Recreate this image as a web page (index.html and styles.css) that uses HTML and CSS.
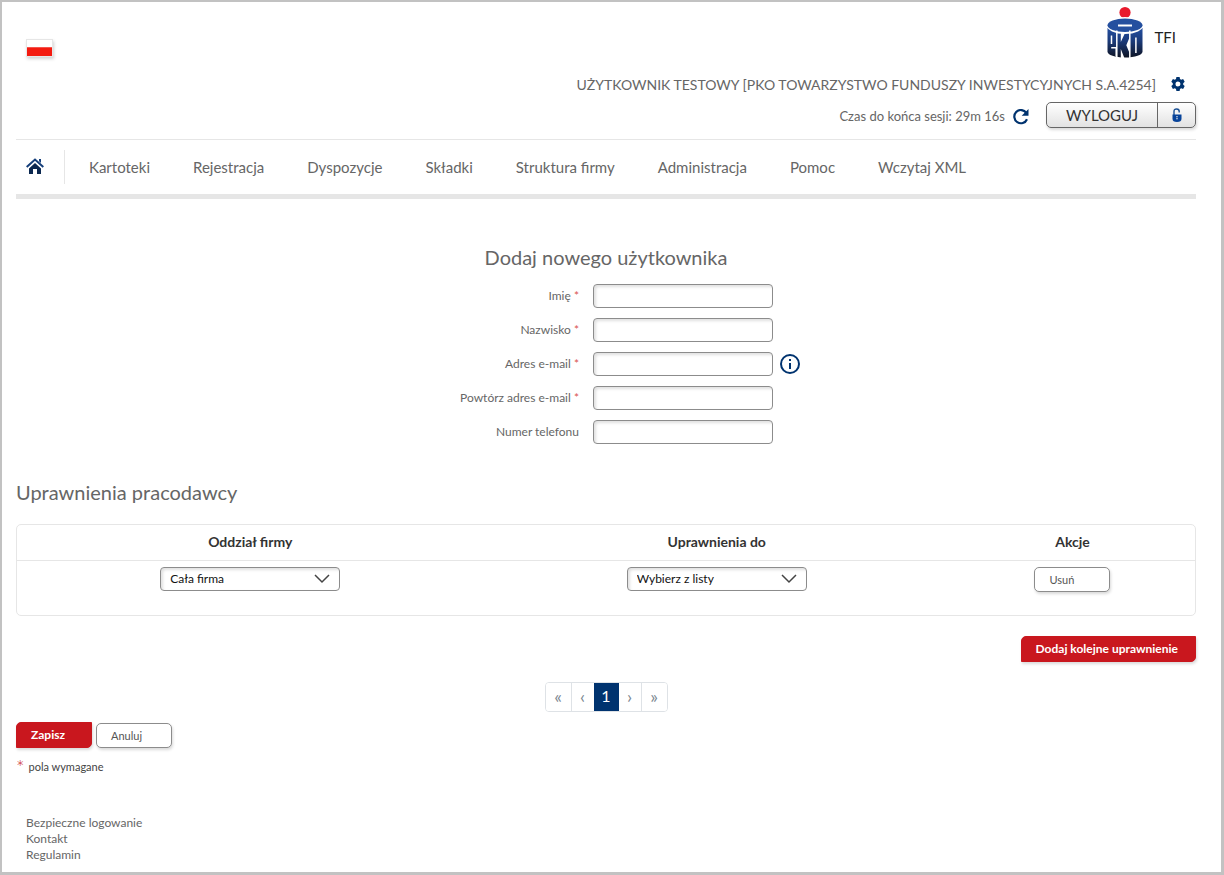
FILE: index.html
```html
<!DOCTYPE html>
<html lang="pl">
<head>
<meta charset="utf-8">
<meta name="viewport" content="width=device-width, initial-scale=1">
<title>Dodaj nowego użytkownika</title>
<link rel="stylesheet" href="styles.css">
</head>
<body class="page">
<header class="header">
  <button class="flag" type="button" aria-label="Polski"><span class="flag-red"></span></button>
  <div class="account">
    <div class="brand">
      <svg class="logo" viewBox="0 0 36 52" aria-hidden="true">
        <defs><linearGradient id="logo-blue" gradientUnits="userSpaceOnUse" x1="0" y1="20" x2="0" y2="51"><stop offset="0" stop-color="#2450a4"/><stop offset=".45" stop-color="#1c3c7c"/><stop offset="1" stop-color="#0e1424"/></linearGradient></defs>
        <circle cx="18" cy="6" r="5.600" fill="#e8192c"/>
        <path fill="url(#logo-blue)" d="M.5 19h35v26c0 3.500-7.500 6-17.500 6S.5 48.500.5 45z"/>
        <ellipse cx="18" cy="19" rx="18.400" ry="8.600" fill="#fff"/>
        <ellipse cx="18" cy="18.800" rx="17.500" ry="6.800" fill="#244f9f"/>
        <path fill="#fff" d="M11 18h14v2H11z"/>
        <path fill="none" stroke="#fff" stroke-width="1.500" d="M4.500 29v8.500M9.800 24v27M4.200 41.200h5v8.800M22.800 24v27.500M28.900 31v15.500"/>
        <path fill="#fff" d="M13.800 26.500h4.200l-4.200 9zM13.800 42.500l3.600 9h-3.600zM22.500 31v15.500l-3.200-7.800z"/>
      </svg>
      <span class="brand-name">TFI</span>
    </div>
    <div class="user">
      <span>UŻYTKOWNIK TESTOWY [PKO TOWARZYSTWO FUNDUSZY INWESTYCYJNYCH S.A.4254]</span>
      <button class="icon-button" type="button" aria-label="Ustawienia">
        <svg width="14" height="14" viewBox="0 0 14 14" aria-hidden="true"><path fill="#00336f" fill-rule="evenodd" d="M5.400 0h3.200l.4 2 1.200.7 1.900-.7 1.600 2.800L12.200 6.200v1.600l1.500 1.300-1.600 2.800-1.900-.7L9 12l-.4 2H5.400L5 12l-1.200-.8-1.900.7L.3 9.100l1.500-1.300V6.200L.3 4.800 1.900 2l1.900.7L5 2zM7 4.500a2.500 2.500 0 100 5 2.500 2.500 0 000-5z"/></svg>
      </button>
    </div>
    <div class="session">
      <span class="session-time">Czas do końca sesji: 29m 16s</span>
      <button class="icon-button" type="button" aria-label="Odśwież sesję">
        <svg width="16" height="16" viewBox="0 0 16 16" aria-hidden="true"><path fill="none" stroke="#00336f" stroke-width="2.200" d="M13.300 3.800A6.600 6.600 0 1014 10.200"/><path fill="#00336f" d="M15.500 0v6.800H8.700z"/></svg>
      </button>
      <button class="logout" type="button">
        <span class="logout-text">WYLOGUJ</span>
        <span class="logout-lock"><svg width="10" height="14" viewBox="0 0 10 14" aria-hidden="true"><path fill="none" stroke="#1b5195" stroke-width="1.400" d="M2 7V3.400Q2 1 4.600 1T7.200 3.400v1"/><path fill="#07439a" fill-rule="evenodd" d="M.5 6.500h9v4.200Q9.500 14 5 14T.5 10.700zM4.200 8.300v1h1.600v-1zM4.200 10.300v1h1.600v-1z"/></svg></span>
      </button>
    </div>
  </div>
</header>

<nav class="nav">
  <a class="home" href="#" aria-label="Strona główna">
    <svg width="18" height="16" viewBox="0 0 18 16" aria-hidden="true"><path fill="none" stroke="#153f7b" stroke-width="2" d="M.7 9L9 1.500 17.300 9"/><path fill="#153f7b" d="M13 1h2v4l-2-1.800z"/><path fill="#0b2850" d="M3 10.400l6-5.400 6 5.400V16h-4v-5H7v5H3z"/></svg>
  </a>
  <a class="nav-link" href="#">Kartoteki</a>
  <a class="nav-link" href="#">Rejestracja</a>
  <a class="nav-link" href="#">Dyspozycje</a>
  <a class="nav-link" href="#">Składki</a>
  <a class="nav-link" href="#">Struktura firmy</a>
  <a class="nav-link" href="#">Administracja</a>
  <a class="nav-link" href="#">Pomoc</a>
  <a class="nav-link" href="#">Wczytaj XML</a>
</nav>

<main>
  <form class="form">
    <h1 class="title title-center">Dodaj nowego użytkownika</h1>
    <div class="fields">
      <div class="field"><label class="label" for="imie">Imię <span class="star">*</span></label><div class="control"><input class="input" id="imie" type="text"></div></div>
      <div class="field"><label class="label" for="nazwisko">Nazwisko <span class="star">*</span></label><div class="control"><input class="input" id="nazwisko" type="text"></div></div>
      <div class="field"><label class="label" for="email">Adres e-mail <span class="star">*</span></label><div class="control"><input class="input" id="email" type="email">
        <button class="icon-button" type="button" aria-label="Informacja"><svg width="20" height="20" viewBox="0 0 20 20" aria-hidden="true"><circle cx="10" cy="10" r="9" fill="none" stroke="#00336f" stroke-width="2"/><path fill="#00336f" d="M9 5h2v2H9zM9 9h2v6H9z"/></svg></button></div></div>
      <div class="field"><label class="label" for="email2">Powtórz adres e-mail <span class="star">*</span></label><div class="control"><input class="input" id="email2" type="email"></div></div>
      <div class="field"><label class="label" for="telefon">Numer telefonu</label><div class="control"><input class="input" id="telefon" type="tel"></div></div>
    </div>

    <h2 class="title">Uprawnienia pracodawcy</h2>
    <div class="panel">
      <table class="table">
        <thead><tr><th class="col-wide">Oddział firmy</th><th class="col-wide">Uprawnienia do</th><th>Akcje</th></tr></thead>
        <tbody><tr>
          <td><select class="select" aria-label="Oddział firmy"><option>Cała firma</option></select></td>
          <td><select class="select" aria-label="Uprawnienia do"><option>Wybierz z listy</option></select></td>
          <td><button class="button" type="button">Usuń</button></td>
        </tr></tbody>
      </table>
    </div>
    <div class="add-row"><button class="button button-red" type="button">Dodaj kolejne uprawnienie</button></div>

    <div class="pager">
      <button class="page-button page-end" type="button">«</button>
      <button class="page-button" type="button">‹</button>
      <button class="page-button page-current" type="button" aria-current="page">1</button>
      <button class="page-button" type="button">›</button>
      <button class="page-button page-end" type="button">»</button>
    </div>

    <div class="actions">
      <button class="button button-red" type="submit">Zapisz</button>
      <button class="button" type="button">Anuluj</button>
    </div>
    <p class="required"><span class="required-star">*</span><span>pola wymagane</span></p>
  </form>
</main>

<footer class="footer">
  <a class="footer-link" href="#">Bezpieczne logowanie</a>
  <a class="footer-link" href="#">Kontakt</a>
  <a class="footer-link" href="#">Regulamin</a>
</footer>
</body>
</html>
```
FILE: styles.css
```css
*, *::before, *::after { box-sizing: border-box; }

.page {
  min-height: 100vh;
  margin: 0;
  padding: 4px 25px 0 14px;
  border: solid #c2c2c2;
  border-width: 2px 3px 3px 2px;
  background: #fff;
  color: #666;
  font-family: Lato, "Open Sans", sans-serif;
  font-size: 12px;
}

button, input, select { font: inherit; color: inherit; }
button { cursor: pointer; }
a { color: inherit; text-decoration: none; }
svg { display: block; }

.header {
  display: flex;
  justify-content: space-between;
  align-items: flex-start;
}

.flag {
  display: flex;
  align-items: flex-end;
  width: 27px;
  height: 18px;
  margin: 33px 0 0 10px;
  padding: 0;
  border: 1px solid #e6e6e6;
  background: #fff;
  box-shadow: 1px 2px 3px rgba(0, 0, 0, .18);
}
.flag-red {
  width: 100%;
  height: 9px;
  border-top: 1px solid #f4554e;
  background: #f41b10;
}

.account {
  display: flex;
  flex-direction: column;
  align-items: flex-end;
  height: 133px;
}
.brand {
  display: flex;
  align-items: center;
  gap: 11px;
  padding-right: 20px;
}
.logo { width: 36px; height: 53px; }
.brand-name {
  padding-top: 8px;
  color: #222;
  font-size: 15px;
}
.user {
  display: flex;
  align-items: center;
  gap: 15px;
  height: 20px;
  margin-top: 15px;
  padding-right: 11px;
  font-size: 14px;
}
.session {
  display: flex;
  align-items: center;
  height: 26px;
  margin-top: 8px;
}
.session-time {
  margin-right: 8px;
  padding-top: 2px;
  font-size: 13px;
}
.icon-button {
  padding: 0;
  border: 0;
  background: none;
}
.session .icon-button { padding-top: 3px; }
.logout {
  display: flex;
  align-items: stretch;
  width: 150px;
  height: 26px;
  margin-left: 17px;
  padding: 0;
  border: 1px solid #666;
  border-radius: 5px;
  background: linear-gradient(#fff, #e2e2e2);
  box-shadow: 1px 2px 3px rgba(0, 0, 0, .15);
  color: #333;
  font-size: 15px;
}
.logout-text {
  flex: 1;
  align-self: center;
  line-height: 24px;
}
.logout-lock {
  display: flex;
  align-items: center;
  justify-content: center;
  width: 38px;
  border-left: 1px solid #666;
}

.nav {
  display: flex;
  align-items: center;
  gap: 43px;
  height: 60px;
  border-top: 1px solid #e6e6e6;
  border-bottom: 5px solid #e6e6e6;
  font-size: 15px;
}
.home {
  display: flex;
  align-items: center;
  width: 49px;
  height: 34px;
  margin-right: -19px;
  padding: 0 0 2px 10px;
  border-right: 1px solid #e6e6e6;
}
.nav-link { line-height: 24px; white-space: nowrap; }

.title {
  margin: 0;
  font-size: 20px;
  font-weight: 400;
  line-height: 28px;
}
.title-center {
  margin-top: 44px;
  text-align: center;
}

.fields {
  display: grid;
  gap: 10px;
  margin: 13px 0 34px;
}
.field {
  display: grid;
  grid-template-columns: calc(50% - 27px) 1fr;
  align-items: start;
  gap: 14px;
}
.label {
  line-height: 24px;
  text-align: right;
}
.star { color: #d9534f; }
.control {
  display: flex;
  align-items: center;
  gap: 7px;
  height: 24px;
}
.input, .select {
  width: 180px;
  height: 24px;
  border: 1px solid #8c8c8c;
  border-radius: 4px;
  background: #fff;
  box-shadow: inset 2px 2px 3px rgba(0, 0, 0, .12);
}
.input { padding: 0 8px; }
.select {
  display: block;
  margin: 0 auto;
  padding: 0 26px 1px 9px;
  appearance: none;
  background: url("data:image/svg+xml,%3Csvg xmlns='http://www.w3.org/2000/svg' width='16' height='10'%3E%3Cpath d='M1 1l7 7 7-7' fill='none' stroke='%23444' stroke-width='1.500'/%3E%3C/svg%3E") no-repeat right 9px center;
  color: #111;
}

.panel {
  margin-top: 18px;
  border: 1px solid #e6e6e6;
  border-radius: 5px;
}
.table {
  width: 100%;
  border-collapse: separate;
  border-spacing: 0;
  table-layout: fixed;
}
.table th {
  height: 36px;
  padding: 0 0 2px;
  border-bottom: 1px solid #e6e6e6;
  color: #333;
  font-size: 14px;
  font-weight: 700;
}
.table td {
  height: 54px;
  padding: 6px 0 0;
  text-align: center;
  vertical-align: top;
}
.col-wide { width: 39.6%; }

.button {
  min-width: 76px;
  height: 25px;
  padding: 0 14px 1px;
  border: 1px solid #8c8c8c;
  border-radius: 5px;
  background: #fff;
  box-shadow: 1px 2px 3px rgba(0, 0, 0, .15);
  color: #555;
  font-size: 11px;
  text-align: left;
}
.button-red {
  height: 26px;
  padding: 0 17px 2px 14px;
  border-color: #c9171e;
  border-radius: 5px 0;
  background: #c9171e;
  color: #fff;
  font-size: 12px;
  font-weight: 700;
}
.add-row {
  display: flex;
  justify-content: flex-end;
  margin-top: 20px;
}

.pager {
  display: flex;
  width: max-content;
  margin: 20px auto 0;
  border: 1px solid #dee2e6;
  border-radius: 4px;
  overflow: hidden;
}
.page-button {
  width: 22px;
  height: 28px;
  padding: 0 0 3px;
  border: 0;
  background: #fff;
  color: #7c8791;
  font-size: 18px;
  line-height: 24px;
}
.page-end { width: 26px; }
.page-end:first-child { border-right: 1px solid #dee2e6; }
.page-end:last-child { border-left: 1px solid #dee2e6; }
.page-current {
  width: 25px;
  background: #00336f;
  color: #fff;
  font-size: 16px;
}

.actions {
  display: flex;
  align-items: flex-end;
  gap: 4px;
  margin-top: 10px;
}
.required {
  display: flex;
  gap: 4px;
  margin: 8px 0 0;
  color: #444;
  font-size: 11px;
  line-height: 22px;
}
.required-star {
  color: #c9171e;
  font-size: 20px;
  font-weight: 300;
}

.footer {
  display: flex;
  flex-direction: column;
  align-items: flex-start;
  padding: 37px 10px 9px;
}
.footer-link { line-height: 16px; }
```
